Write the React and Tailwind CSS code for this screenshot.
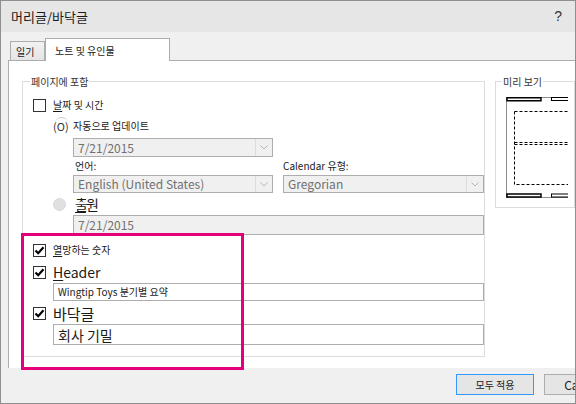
const font = "font-['Noto_Sans_CJK_KR','Noto_Sans',sans-serif]";

function Check({ checked }) {
  return (
    <div className="w-[13px] h-[13px] border border-[#333333] bg-white flex items-center justify-center shrink-0">
      {checked && (
        <svg width="11" height="11" viewBox="0 0 11 11">
          <path d="M1.5 5.5 L4.2 8.2 L9.5 2.2" fill="none" stroke="#000" strokeWidth="2.2" />
        </svg>
      )}
    </div>
  );
}

function Chevron() {
  return (
    <div className="w-[17px] h-full border-l border-[#dcdcdc] flex items-center justify-center">
      <svg width="8" height="5" viewBox="0 0 8 5">
        <path d="M0.5 0.5 L4 4 L7.5 0.5" fill="none" stroke="#b4b4b4" strokeWidth="1" />
      </svg>
    </div>
  );
}

function Select({ value, className }) {
  return (
    <div className={`h-[18px] border border-[#adadad] bg-[#f0f0f0] flex items-center justify-between ${className}`}>
      <span className="pl-[4px] text-[12px] leading-none text-[#707070]">{value}</span>
      <Chevron />
    </div>
  );
}

function Preview() {
  return (
    <svg width="62" height="102" viewBox="0 0 62 102">
      <path d="M0.5 0.5 V100.5 M0 0.5 H62 M0 100.5 H62" stroke="#8c8c8c" strokeWidth="1" fill="none" />
      <rect x="1" y="0.75" width="34" height="3" fill="#fff" stroke="#000" strokeWidth="1.5" />
      <rect x="45.5" y="0.5" width="20" height="3" fill="#fff" stroke="#000" strokeWidth="1" />
      <rect x="1" y="97" width="34" height="3" fill="#fff" stroke="#000" strokeWidth="1.5" />
      <rect x="45.5" y="97" width="20" height="3" fill="#fff" stroke="#000" strokeWidth="1" />
      <path d="M8.5 14.5 H62 M8.5 14.5 V87.5 H62 M8.5 45.5 H62 M8.5 47.5 H62" stroke="#000" strokeWidth="1" strokeDasharray="3 2" fill="none" />
    </svg>
  );
}

export default function App() {
  return (
    <div className={`relative w-[576px] h-[404px] overflow-hidden bg-[#f0f0f0] border border-[#8f8f8f] flex flex-col ${font} text-[#1a1a1a]`}>
      <div className="h-[31px] bg-[#e6e6e6] flex items-center justify-between pl-[10px] pr-[13px] shrink-0">
        <span className="text-[13px]">머리글/바닥글</span>
        <span className="text-[14px] font-['Liberation_Sans',sans-serif] text-[#333]">?</span>
      </div>

      <div className="h-[28px] flex items-end pl-[9px] shrink-0">
        <div className="w-[35px] h-[19px] border border-b-0 border-[#adadad] bg-gradient-to-b from-[#f2f2f2] to-[#e5e5e5] text-[10px] flex items-center pl-[5px]">
          일기
        </div>
        <div className="relative z-10 -mb-[1px] w-[125px] h-[23px] border border-b-0 border-[#adadad] bg-white text-[10px] flex items-center pl-[9px]">
          노트 및 유인물
        </div>
      </div>

      <div className="h-[308px] ml-[7px] border-t border-l border-[#adadad] bg-white flex items-start shrink-0">
        <div className="ml-[13px] mt-[20px] w-[474px] h-[276px] border border-[#dcdcdc] flex flex-col text-[10px]">
          <span className="-mt-[7px] ml-[7px] px-[1px] self-start bg-white leading-[13px] text-[#333]">페이지에 포함</span>

          <div className="mt-[10px] h-[14px] pl-[10px] flex items-center gap-[7px]">
            <Check />
            <span className="leading-none"><span className="underline underline-offset-2">날</span>짜 및 시간</span>
          </div>

          <div className="mt-[7px] h-[14px] pl-[30px] flex items-center">
            <span className="relative w-[20px] text-[11px] leading-none text-[#333]">
              (O)
              <span className="absolute left-[2px] -top-[4px] w-[13px] h-[13px] rounded-full border-t border-[#c8c8c8]" />
            </span>
            <span className="leading-none">자동으로 업데이트</span>
          </div>

          <Select value="7/21/2015" className="mt-[5px] ml-[50px] w-[200px] !h-[19px]" />

          <div className="mt-[2px] h-[14px] flex items-center">
            <span className="ml-[52px] w-[208px] leading-none">언어:</span>
            <span className="leading-none">Calendar 유형:</span>
          </div>

          <div className="mt-[2px] flex">
            <Select value="English (United States)" className="ml-[50px] w-[200px]" />
            <Select value="Gregorian" className="ml-[10px] w-[201px]" />
          </div>

          <div className="mt-[2px] h-[18px] pl-[30px] flex items-center">
            <div className="w-[13px] h-[13px] rounded-full bg-[#e0e0e0] border border-[#d8d8d8]" />
            <span className="ml-[9px] text-[14px] leading-none tracking-[-2px]"><span className="underline underline-offset-2">출</span>원</span>
          </div>

          <div className="mt-[2px] ml-[50px] w-[411px] h-[20px] border border-[#adadad] bg-[#f0f0f0] flex items-center pl-[4px] text-[12px] text-[#707070]">
            7/21/2015
          </div>

          <div className="mt-[8px] h-[14px] pl-[10px] flex items-center gap-[7px]">
            <Check checked />
            <span className="leading-none"><span className="underline underline-offset-2">열</span>망하는 숫자</span>
          </div>

          <div className="mt-[8px] h-[14px] pl-[10px] flex items-center gap-[7px]">
            <Check checked />
            <span className="text-[14px] leading-none"><span className="underline underline-offset-2">H</span>eader</span>
          </div>

          <div className="mt-[4px] ml-[30px] w-[431px] h-[18px] border border-[#adadad] bg-white flex items-center pl-[4px] text-[10px] leading-none">
            Wingtip Toys 분기별 요약
          </div>

          <div className="mt-[5px] h-[14px] pl-[10px] flex items-center gap-[7px]">
            <Check checked />
            <span className="text-[15px] leading-none">바닥글</span>
          </div>

          <div className="mt-[4px] ml-[30px] w-[431px] h-[21px] border border-[#adadad] bg-white flex items-center pl-[4px] text-[14px] leading-none">
            회사 기밀
          </div>
        </div>

        <div className="ml-[10px] mt-[20px] w-[120px] h-[127px] border border-[#dcdcdc] flex flex-col text-[10px]">
          <span className="-mt-[7px] ml-[6px] px-[1px] self-start bg-white leading-[13px] text-[#333]">미리 보기</span>
          <div className="mt-[9px] ml-[10px]">
            <Preview />
          </div>
        </div>
      </div>

      <div className="flex-1 flex items-start pt-[6px] pl-[455px] gap-[10px]">
        <button className="shrink-0 w-[78px] h-[21px] border border-[#3399ff] bg-[#e5e5e5] text-[10px] leading-none">
          모두 적용
        </button>
        <button className="shrink-0 w-[78px] h-[21px] border border-[#adadad] bg-[#e5e5e5] text-[12px] leading-none">
          Cancel
        </button>
      </div>

      <div className="absolute left-[20px] top-[232px] w-[223px] h-[137px] border-[3px] border-[#e4007c]" />
    </div>
  );
}
